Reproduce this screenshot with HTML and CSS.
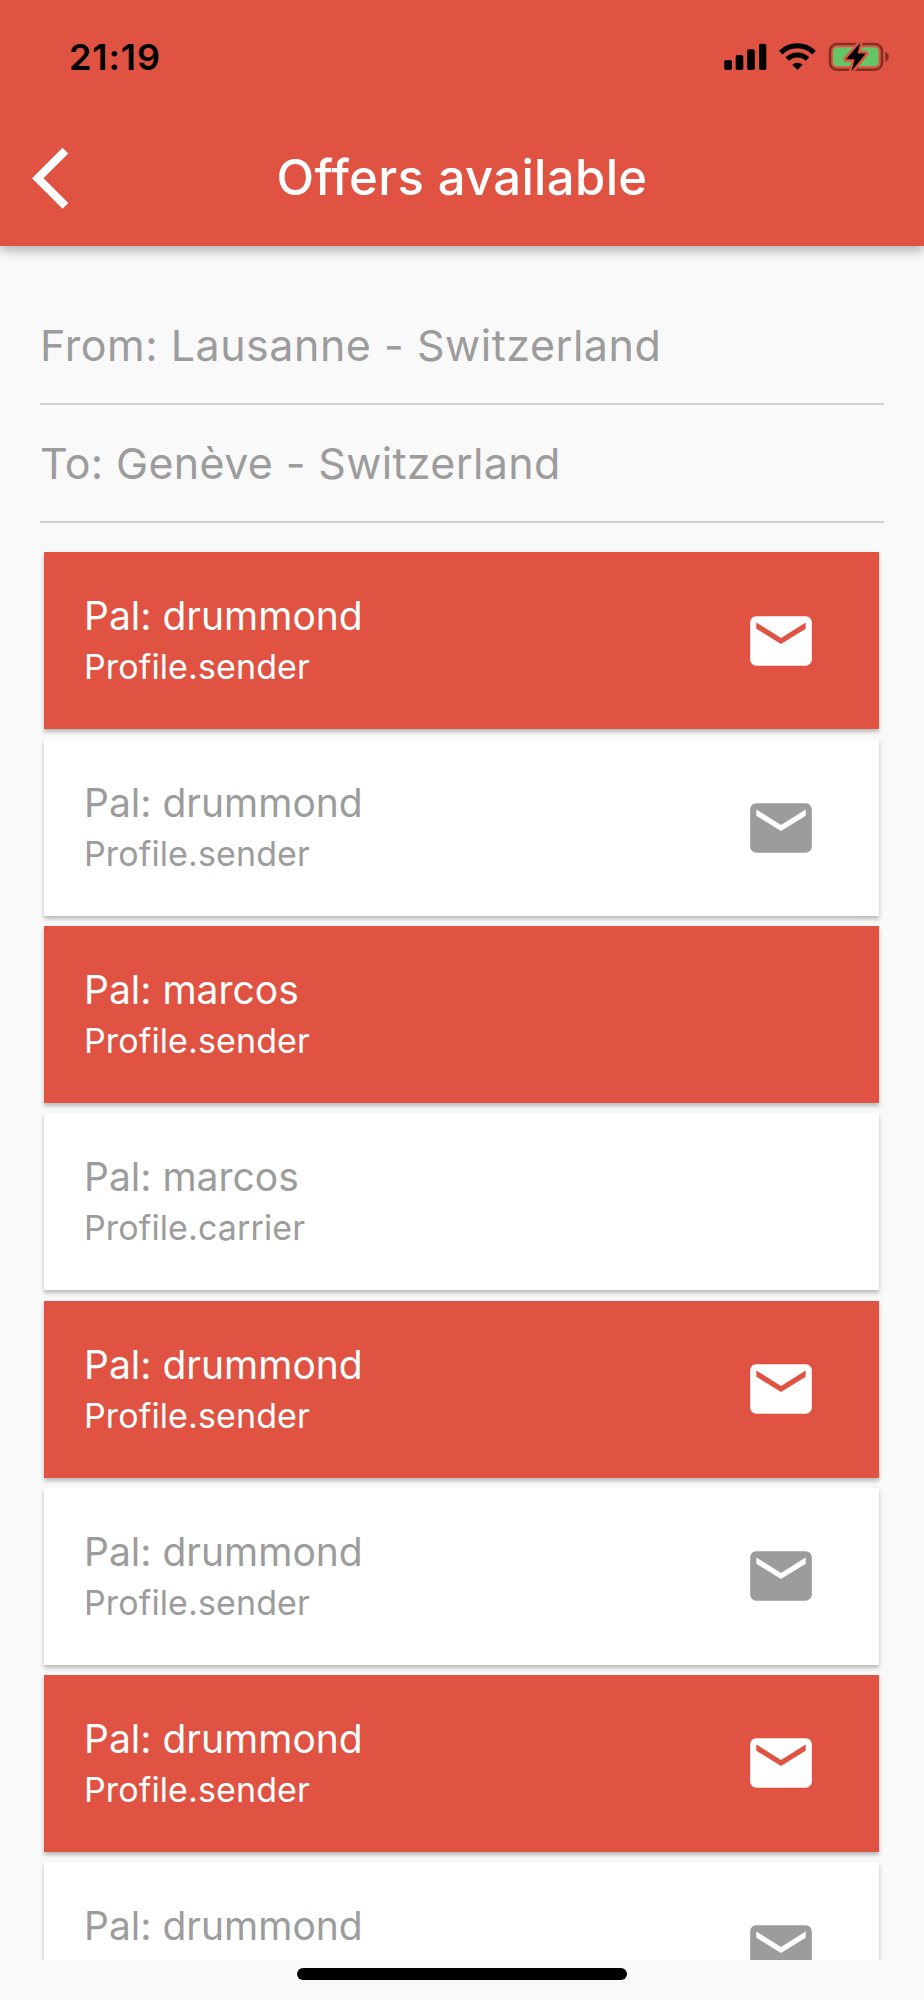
FILE: index.html
```html
<!DOCTYPE html>
<html lang="en">
<head>
<meta charset="utf-8">
<title>Offers available</title>
<link rel="stylesheet" href="styles.css">
</head>
<body>
<svg width="0" height="0" class="defs">
  <symbol id="mail" viewBox="0 0 24 24"><path d="M20 4H4c-1.1 0-1.99.9-1.99 2L2 18c0 1.1.9 2 2 2h16c1.1 0 2-.9 2-2V6c0-1.1-.9-2-2-2zm0 4l-8 5-8-5V6l8 5 8-5v2z"/></symbol>
</svg>
<div class="screen">
  <header class="header">
    <div class="status">
      <span class="time">21:19</span>
      <svg class="indicators" width="170" height="34" viewBox="0 0 170 34">
        <rect x="4.3" y="20" width="7.6" height="10" rx="1.8"/>
        <rect x="15.7" y="15" width="7.6" height="15" rx="1.8"/>
        <rect x="27.2" y="9.3" width="7.6" height="20.7" rx="1.8"/>
        <rect x="39" y="3.7" width="7.3" height="26.3" rx="1.8"/>
        <g fill="none" stroke="#000" stroke-width="5">
          <path d="M60.7 12.6a24 24 0 0 1 33.4 0"/>
          <path d="M67.2 19a14.7 14.7 0 0 1 20.4 0"/>
        </g>
        <path d="M77.4 30l-5.2-5.2a7.6 7.6 0 0 1 10.4 0z"/>
        <rect x="110" y="4" width="52" height="25.7" rx="7" fill="none" stroke="#832f25" stroke-width="2.6"/>
        <path d="M165.2 11.8q3.6 1.4 3.6 5t-3.6 5z" fill="#832f25"/>
        <rect x="113" y="7.3" width="45.5" height="19" rx="4" fill="#65c466"/>
        <path class="bolt" d="M140.3 2.7L126 19.3H134.5L131.5 31.3L145.8 13.5H137.6z"/>
      </svg>
    </div>
    <nav class="navbar">
      <svg class="back" width="38" height="64" viewBox="0 0 38 64"><path d="M0 32.3L30.5 1.8l5.8 5.6L11.5 32.3 36.3 57 30.5 62.8z"/></svg>
      <h1 class="title">Offers available</h1>
    </nav>
  </header>
  <main class="content">
    <div class="field from">From: Lausanne - Switzerland</div>
    <div class="field to">To: Genève - Switzerland</div>
    <ul class="offers">
      <li class="card red"><div class="text"><p class="name">Pal: drummond</p><p class="profile">Profile.sender</p></div><svg class="mail"><use href="#mail"/></svg></li>
      <li class="card"><div class="text"><p class="name">Pal: drummond</p><p class="profile">Profile.sender</p></div><svg class="mail"><use href="#mail"/></svg></li>
      <li class="card red"><div class="text"><p class="name">Pal: marcos</p><p class="profile">Profile.sender</p></div></li>
      <li class="card"><div class="text"><p class="name">Pal: marcos</p><p class="profile">Profile.carrier</p></div></li>
      <li class="card red"><div class="text"><p class="name">Pal: drummond</p><p class="profile">Profile.sender</p></div><svg class="mail"><use href="#mail"/></svg></li>
      <li class="card"><div class="text"><p class="name">Pal: drummond</p><p class="profile">Profile.sender</p></div><svg class="mail"><use href="#mail"/></svg></li>
      <li class="card red"><div class="text"><p class="name">Pal: drummond</p><p class="profile">Profile.sender</p></div><svg class="mail"><use href="#mail"/></svg></li>
      <li class="card"><div class="text"><p class="name">Pal: drummond</p></div><svg class="mail"><use href="#mail"/></svg></li>
    </ul>
  </main>
  <footer class="home"><div class="bar"></div></footer>
</div>
</body>
</html>
```

FILE: styles.css
```css
* { box-sizing: border-box; margin: 0; padding: 0; }
body { background: #f9f9f9; font-family: Inter, "Liberation Sans", sans-serif; }
.defs { display: block; }
.screen { width: 924px; height: 2000px; display: flex; flex-direction: column; overflow: hidden; }
.header {
  position: relative; z-index: 1; height: 246px; flex: none;
  background: #e05241; box-shadow: 0 5px 10px rgba(0, 0, 0, .28);
}
.status { display: flex; justify-content: space-between; height: 112px; padding: 40px 34px 0 69px; }
.time { font-size: 36px; font-weight: 600; line-height: 34px; letter-spacing: .9px; }
.navbar { display: flex; align-items: center; height: 130px; padding: 1px 32px 0; }
.back { flex: none; fill: #fff; }
.title {
  flex: 1; margin-right: 38px; text-align: center; color: #fff;
  font-size: 49px; font-weight: 500; line-height: 60px; letter-spacing: .35px;
}
.content { height: 1714px; flex: none; padding: 41px 40px 0; overflow: hidden; }
.field {
  height: 118px; border-bottom: 2px solid #cfcfcf; color: #9c9c9c;
  font-size: 43px; line-height: 116px; white-space: nowrap;
}
.from { letter-spacing: .52px; }
.to { letter-spacing: .34px; }
.offers { list-style: none; display: flex; flex-direction: column; gap: 10.14px; padding: 29px 5px 0 4px; }
.card {
  display: flex; align-items: center; justify-content: space-between;
  height: 177px; flex: none; padding: 0 61px 0 40px;
  background: #fff; color: #9c9c9c; box-shadow: 0 3px 4px rgba(0, 0, 0, .26);
}
.red { background: #e05241; color: #fff; }
.text { height: 102px; margin-top: 1px; }
.name { font-size: 39px; line-height: 52px; white-space: nowrap; }
.profile { font-size: 34px; line-height: 50px; letter-spacing: .12px; white-space: nowrap; }
.mail { width: 74px; height: 74px; fill: #9c9c9c; }
.red .mail { fill: #fff; }
.bolt { stroke: #e05241; stroke-width: 5; stroke-linejoin: round; paint-order: stroke; }
.home { flex: 1; display: flex; justify-content: center; padding-top: 8px; }
.bar { width: 330px; height: 12px; border-radius: 6px; background: #000; }
```
